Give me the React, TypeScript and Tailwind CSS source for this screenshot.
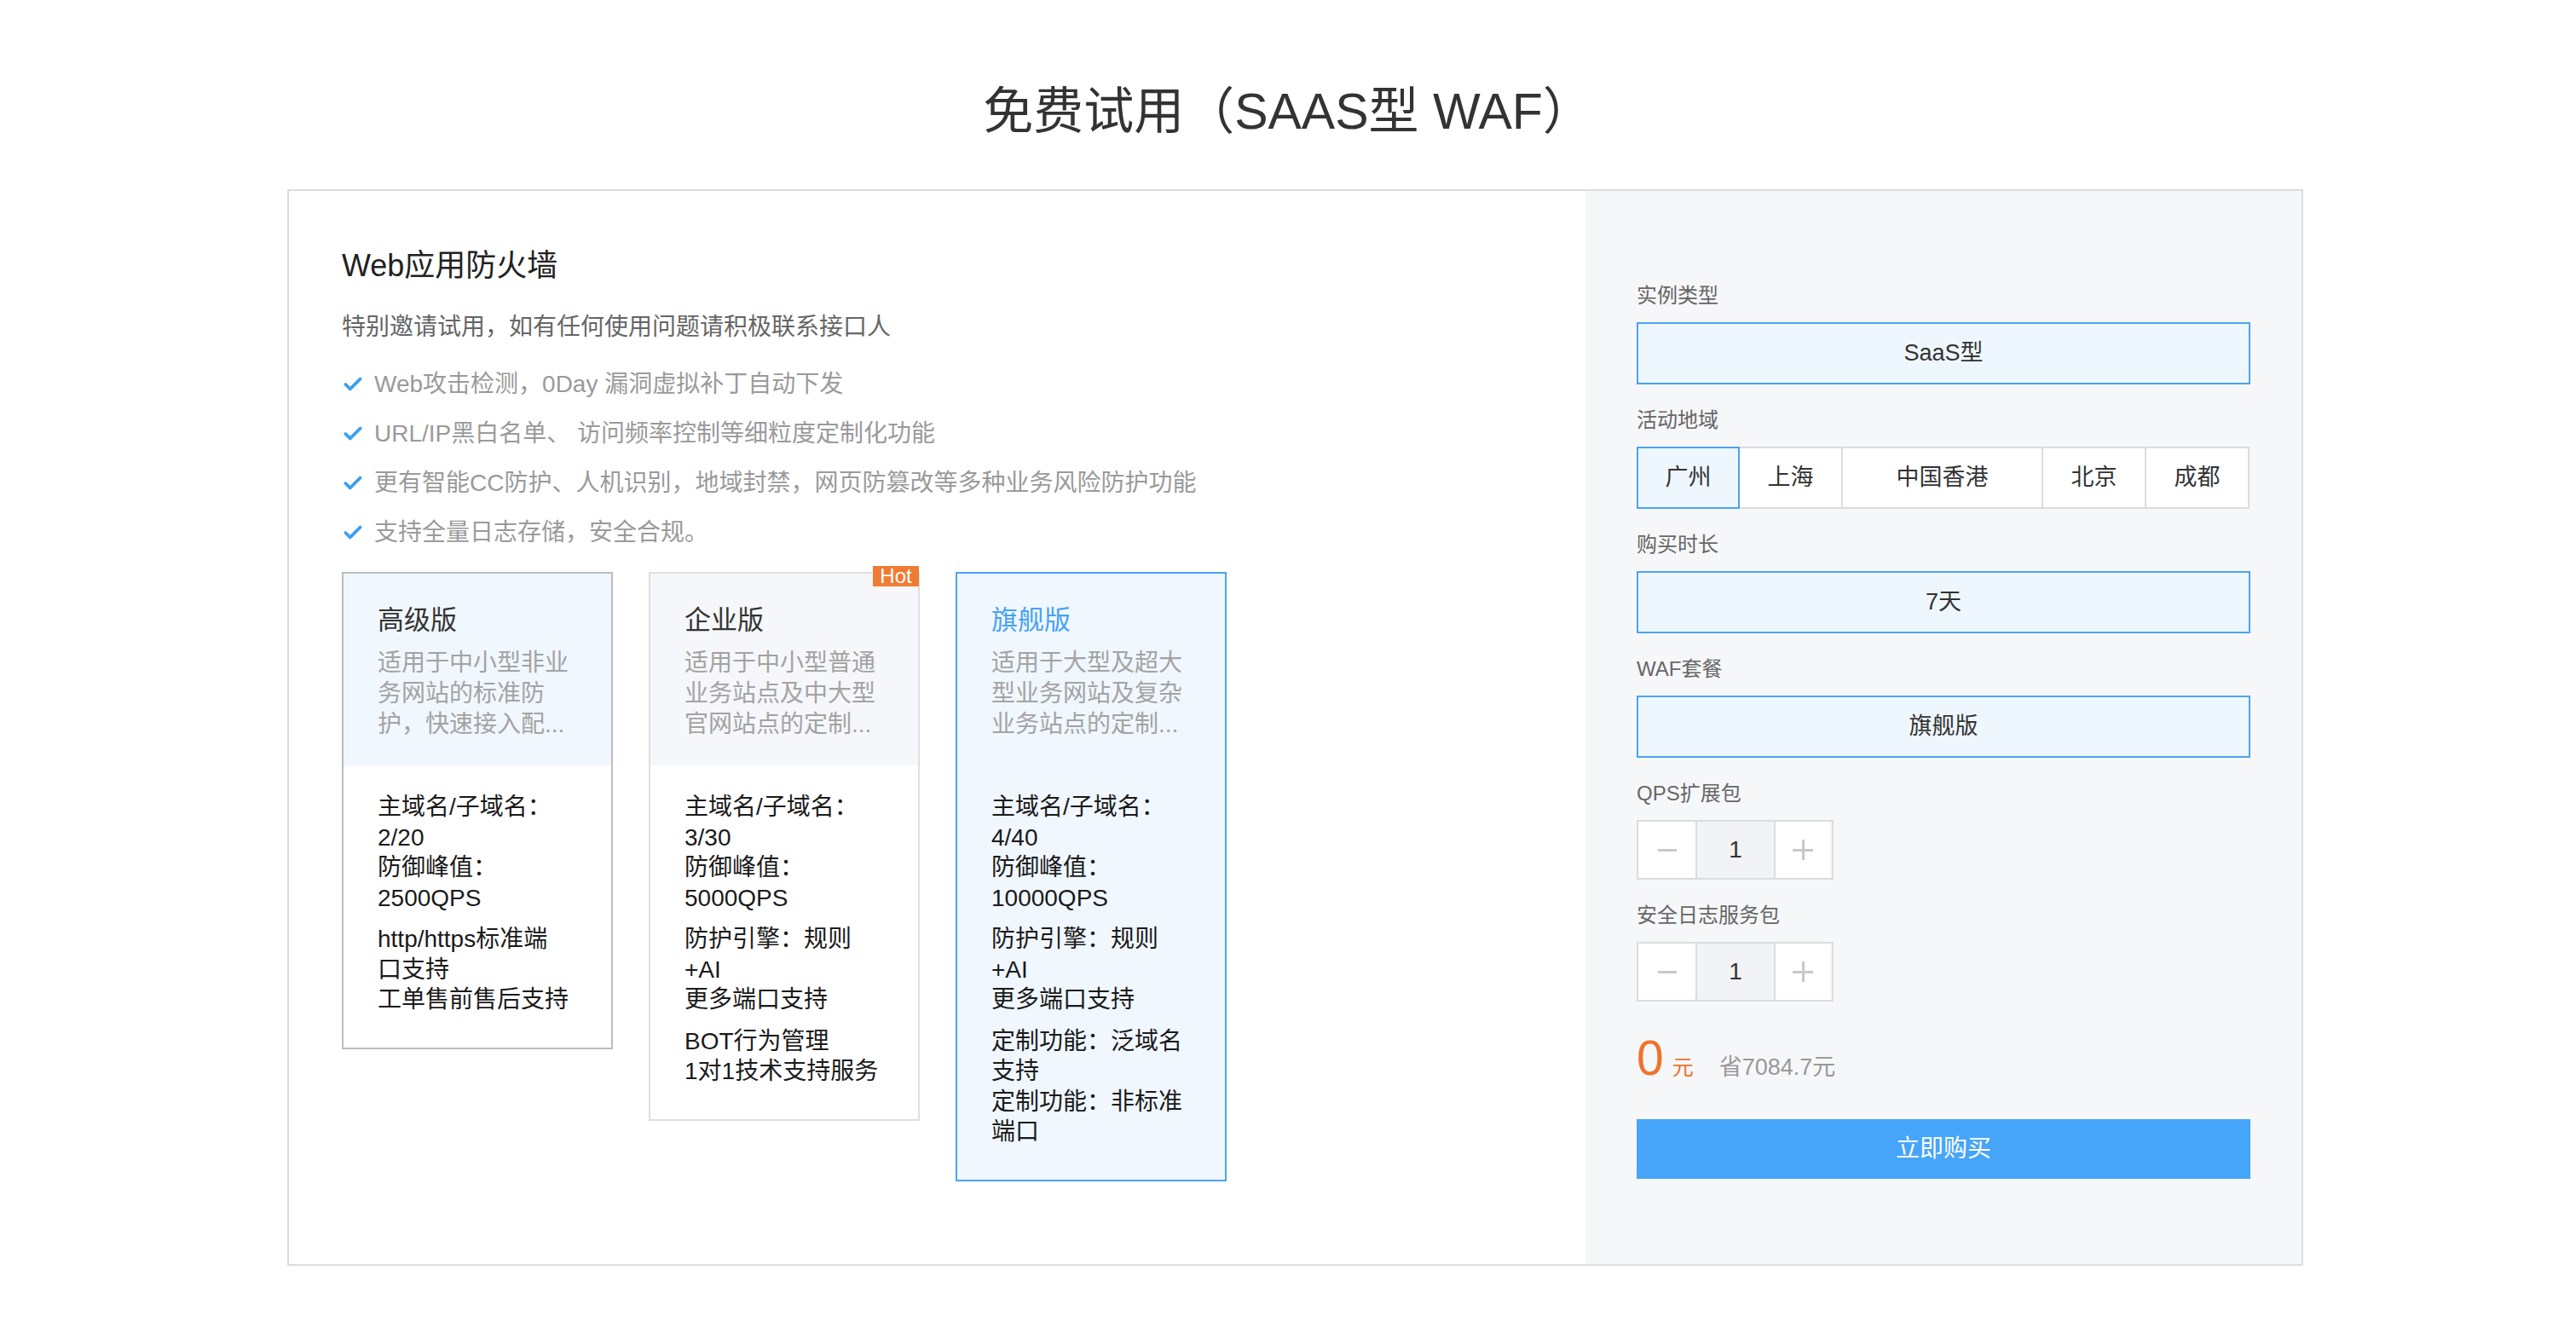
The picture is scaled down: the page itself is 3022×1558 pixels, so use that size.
import { Check } from 'lucide-react';

// Plan cards shown in the left column
const plans = [
  {
    name: '高级版',
    desc: ['适用于中小型非业', '务网站的标准防', '护，快速接入配...'],
    tone: 'basic',
    groups: [
      ['主域名/子域名：', '2/20', '防御峰值：', '2500QPS'],
      ['http/https标准端', '口支持', '工单售前售后支持'],
    ],
  },
  {
    name: '企业版',
    desc: ['适用于中小型普通', '业务站点及中大型', '官网站点的定制...'],
    tone: 'hot',
    groups: [
      ['主域名/子域名：', '3/30', '防御峰值：', '5000QPS'],
      ['防护引擎：规则', '+AI', '更多端口支持'],
      ['BOT行为管理', '1对1技术支持服务'],
    ],
  },
  {
    name: '旗舰版',
    desc: ['适用于大型及超大', '型业务网站及复杂', '业务站点的定制...'],
    tone: 'active',
    groups: [
      ['主域名/子域名：', '4/40', '防御峰值：', '10000QPS'],
      ['防护引擎：规则', '+AI', '更多端口支持'],
      ['定制功能：泛域名', '支持', '定制功能：非标准', '端口'],
    ],
  },
];

const features = [
  'Web攻击检测，0Day 漏洞虚拟补丁自动下发',
  'URL/IP黑白名单、 访问频率控制等细粒度定制化功能',
  '更有智能CC防护、人机识别，地域封禁，网页防篡改等多种业务风险防护功能',
  '支持全量日志存储，安全合规。',
];

const regions = [
  { name: '广州', w: 'w-[121px]' },
  { name: '上海', w: 'w-[123px] -ml-[2px]' },
  { name: '中国香港', w: 'w-[237px] -ml-[2px]' },
  { name: '北京', w: 'w-[123px] -ml-[2px]' },
  { name: '成都', w: 'w-[123px] -ml-[2px]' },
];

function PlanCard({ plan }: { plan: (typeof plans)[number] }) {
  const border =
    plan.tone === 'active' ? 'border-[#4ba4f5] bg-[#f0f7fe]' : plan.tone === 'hot' ? 'border-[#dedede] bg-white' : 'border-[#bcbcbc] bg-white';
  const head = plan.tone === 'basic' ? 'bg-[#f0f7fe]' : plan.tone === 'hot' ? 'bg-[#f5f7fa]' : '';

  return (
    <div className={`relative w-[318px] border-2 ${border}`}>
      {plan.tone === 'hot' && (
        <div className="absolute -top-[9px] -right-[1px] w-[54px] h-[24px] bg-[#f07b33] text-white text-[24px] leading-[24px] text-center">
          Hot
        </div>
      )}
      <div className={`px-[40px] pt-[33px] pb-[30px] ${head}`}>
        <div className={`text-[31px] leading-[44px] ${plan.tone === 'active' ? 'text-[#46a3f5]' : 'text-[#333]'}`}>
          {plan.name}
        </div>
        <div className="mt-[10px] text-[28px] leading-[36px] text-[#a3a3a3]">
          {plan.desc.map((line) => (
            <div key={line} className="whitespace-nowrap">
              {line}
            </div>
          ))}
        </div>
      </div>
      <div className="px-[40px] pt-[31px] pb-[38px] text-[28px] leading-[35.5px] text-[#1a1a1a]">
        {plan.groups.map((lines, i) => (
          <div key={i} className={i > 0 ? 'mt-[13px]' : ''}>
            {lines.map((line) => (
              <div key={line} className="whitespace-nowrap">
                {line}
              </div>
            ))}
          </div>
        ))}
      </div>
    </div>
  );
}

function Stepper() {
  return (
    <div className="flex w-[231px] h-[70px] border-2 border-[#dcdcdc]">
      <div className="w-[67px] bg-white flex items-center justify-center">
        <span className="block w-[22px] h-[3px] bg-[#c8c8c8]" />
      </div>
      <div className="w-[94px] border-x-2 border-[#dcdcdc] bg-[#f2f3f5] flex items-center justify-center text-[28px] text-[#333]">
        1
      </div>
      <div className="w-[64px] bg-white flex items-center justify-center relative">
        <span className="block w-[24px] h-[3px] bg-[#c8c8c8]" />
        <span className="absolute w-[3px] h-[24px] bg-[#c8c8c8]" />
      </div>
    </div>
  );
}

function Field({ label, children }: { label: string; children: React.ReactNode }) {
  return (
    <div className="mt-[30px] first:mt-0">
      <div className="text-[24px] leading-[24px] text-[#666] mb-[19px]">{label}</div>
      {children}
    </div>
  );
}

function Choice({ text }: { text: string }) {
  return (
    <div className="h-[73px] border-2 border-[#4ba3f3] bg-[#eff7fe] flex items-center justify-center text-[27px] text-[#333]">
      {text}
    </div>
  );
}

export default function App() {
  return (
    <div className="min-h-screen bg-white pb-[70px] font-[family-name:'Liberation_Sans','Noto_Sans_CJK_SC',sans-serif]">
      <h1 className="pt-[92px] text-center text-[59px] leading-[78px] text-[#333] font-normal">免费试用（SAAS型 WAF）</h1>

      <div className="mt-[52px] ml-[337px] w-[2365px] border-2 border-[#dcdcdc] flex">
        {/* Product intro + plans */}
        <div className="flex-1 pl-[62px] pt-[66px]">
          <h2 className="text-[36px] leading-[44px] text-[#222]">Web应用防火墙</h2>
          <p className="mt-[30px] text-[28px] leading-[40px] text-[#666]">特别邀请试用，如有任何使用问题请积极联系接口人</p>
          <ul className="mt-[27px] space-y-[18px]">
            {features.map((f) => (
              <li key={f} className="flex items-center text-[28px] leading-[40px] text-[#9a9a9a]">
                <Check size={26} strokeWidth={3.5} className="text-[#3d9ff0] mr-[12px]" />
                {f}
              </li>
            ))}
          </ul>
          <div className="mt-[26px] flex items-start gap-[42px]">
            {plans.map((p) => (
              <PlanCard key={p.name} plan={p} />
            ))}
          </div>
        </div>

        {/* Order panel */}
        <div className="w-[840px] bg-[#f6f7f9] px-[60px] pt-[111px] pb-[100px]">
          <Field label="实例类型">
            <Choice text="SaaS型" />
          </Field>
          <Field label="活动地域">
            <div className="flex">
              {regions.map((r, i) => (
                <div
                  key={r.name}
                  className={`${r.w} h-[73px] border-2 flex items-center justify-center text-[27px] text-[#333] ${
                    i === 0 ? 'relative z-10 border-[#4ba3f3] bg-[#eff7fe]' : 'border-[#dcdcdc] bg-white'
                  }`}
                >
                  {r.name}
                </div>
              ))}
            </div>
          </Field>
          <Field label="购买时长">
            <Choice text="7天" />
          </Field>
          <Field label="WAF套餐">
            <Choice text="旗舰版" />
          </Field>
          <Field label="QPS扩展包">
            <Stepper />
          </Field>
          <Field label="安全日志服务包">
            <Stepper />
          </Field>

          <div className="mt-[38px] flex items-baseline">
            <span className="text-[57px] leading-[56px] text-[#f0722b]">0</span>
            <span className="ml-[10px] text-[25px] text-[#f0722b]">元</span>
            <span className="ml-[30px] text-[27px] text-[#999]">省7084.7元</span>
          </div>

          <button className="mt-[40px] w-full h-[70px] bg-[#46a5f8] text-white text-[28px]">立即购买</button>
        </div>
      </div>
    </div>
  );
}
